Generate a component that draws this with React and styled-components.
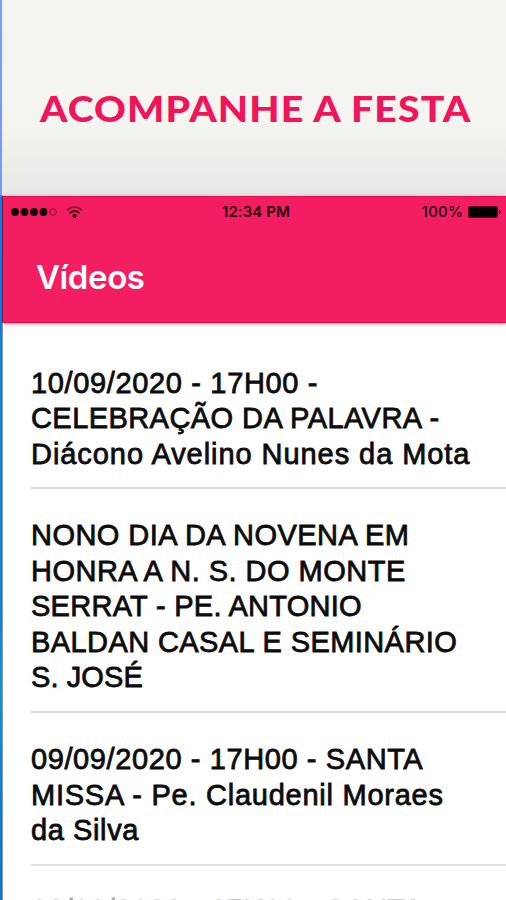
import React from "react";
import styled, { createGlobalStyle } from "styled-components";

const GlobalStyle = createGlobalStyle`
  * { box-sizing: border-box; }
  html, body { margin: 0; height: 900px; overflow: hidden; }
`;

const Page = styled.div`
  display: grid;
  grid-template-columns: 3px 1fr;
  width: 506px;
  height: 900px;
  overflow: hidden;
  background: #fff;
`;

const Edge = styled.div`
  display: grid;
  grid-template-columns: 2px 1fr;
`;

const EdgeGlow = styled.div`
  background: linear-gradient(to bottom, #7d9dfb 0, #7399f8 194px, #087de5 197px, #0680e4 600px, #0499d8 690px, #0580df 790px, #0877dd 900px);
`;

const EdgeRim = styled.div`
  background: linear-gradient(to bottom, #eef2fd 0 195px, #7a1440 196px 322px, #8a979f 323px);
`;

const Screen = styled.main`
  display: flex;
  flex-direction: column;
  min-width: 0;
  height: 900px;
  overflow: hidden;
`;

const Banner = styled.header`
  flex: none;
  height: 196px;
  padding: 84px 0 0 37px;
  background: linear-gradient(to bottom, #f4f5f1 0, #f4f5f1 120px, #e6e9e5 190px, #e6e9e5 196px);
`;

const BannerTitle = styled.h1`
  margin: 0;
  width: max-content;
  font: 900 36px/48px Lato, sans-serif;
  letter-spacing: 1px;
  color: #f0145a;
  white-space: nowrap;
  transform: scaleX(1.09);
  transform-origin: left;
`;

const AppBar = styled.section`
  flex: none;
  height: 127px;
  background: #f31d61;
  border-top: 1px solid #ec0752;
  border-bottom: 1px solid #ec0752;
  box-shadow: 0 1px 4px rgba(0, 0, 0, 0.38);
`;

const StatusBar = styled.div`
  display: grid;
  grid-template-columns: 1fr auto 1fr;
  align-items: center;
  height: 30px;
  padding: 0 5px 0 8px;
  color: #26020d;
  font: 600 15px/30px Inter, sans-serif;
`;

const Signal = styled.div`
  display: flex;
  align-items: center;
  gap: 9px;
  svg { display: block; }
`;

const Clock = styled.span`
  letter-spacing: ${(p) => p.$track}px;
  font-weight: ${(p) => p.$weight};
`;

const Battery = styled.div`
  display: flex;
  align-items: center;
  justify-content: flex-end;
  gap: 5px;
`;

const ScreenTitle = styled.h2`
  margin: 28px 0 0 33px;
  width: max-content;
  font: 600 33px/44px Inter, sans-serif;
  letter-spacing: -0.4px;
  color: #fff;
`;

const List = styled.ul`
  flex: none;
  margin: 0;
  padding: 13.5px 0 0 28px;
  list-style: none;
`;

const Row = styled.li`
  padding: ${(p) => (p.$faded ? 27.6 : 29.2)}px 0 15px;
  border-bottom: 2px solid #dfdfdf;
  color: ${(p) => (p.$faded ? "#aaa" : "#0c0c0c")};
`;

const Line = styled.span`
  display: block;
  width: max-content;
  font: 400 29px/35.5px "Liberation Sans", Arial, sans-serif;
  letter-spacing: ${(p) => p.$track}px;
  -webkit-text-stroke: 0.8px currentColor;
  white-space: nowrap;
`;

const videos = [
  [["10/09/2020 - 17H00 -", 0.65], ["CELEBRAÇÃO DA PALAVRA -", 0.43], ["Diácono Avelino Nunes da Mota", 0.94]],
  [["NONO DIA DA NOVENA EM", 0.45], ["HONRA A N. S. DO MONTE", 0.48], ["SERRAT - PE. ANTONIO", 0.27], ["BALDAN CASAL E SEMINÁRIO", 0.41], ["S. JOSÉ", 0.1]],
  [["09/09/2020 - 17H00 - SANTA", 0.6], ["MISSA - Pe. Claudenil Moraes", 0.75], ["da Silva", 0.6]],
  [["08/09/2020 - 17H00 - SANTA", 0.6]],
];

export default function App() {
  return (
    <Page>
      <GlobalStyle />
      <Edge>
        <EdgeGlow />
        <EdgeRim />
      </Edge>
      <Screen>
        <Banner><BannerTitle>ACOMPANHE A FESTA</BannerTitle></Banner>
        <AppBar>
          <StatusBar>
            <Signal>
              <svg width="46" height="10" viewBox="0 0 46 10">
                {[4, 13.5, 23, 32.5].map((x) => <circle key={x} cx={x} cy="5" r="3.9" fill="#100006" />)}
                <circle cx="42" cy="5" r="3.3" fill="none" stroke="#76102f" strokeWidth="0.9" />
              </svg>
              <svg width="17" height="13" viewBox="0 0 17 13" fill="none" stroke="#18000a">
                <path d="M1 4.3C5.2.1 11.8.1 16 4.3" strokeWidth="1.2" opacity=".7" />
                <path d="M3.7 7.1c2.7-2.7 6.9-2.7 9.6 0" strokeWidth="1.9" />
                <circle cx="8.5" cy="10" r="2" fill="#18000a" stroke="none" />
              </svg>
            </Signal>
            <Clock $track={0.1} $weight={600}>12:34 PM</Clock>
            <Battery>
              <Clock $track={0.2} $weight={500}>100%</Clock>
              <svg width="33" height="12" viewBox="0 0 33 12">
                <rect x="0" y="0" width="30" height="12" rx="2" fill="#5e0a25" />
                <rect x="1.2" y="1.3" width="27.6" height="9.4" rx="1" fill="#000" />
                <path d="M31 4c2 .5 2 3.5 0 4z" fill="#18000a" />
              </svg>
            </Battery>
          </StatusBar>
          <ScreenTitle>Vídeos</ScreenTitle>
        </AppBar>
        <List>
          {videos.map((lines, i) => (
            <Row key={i} $faded={i === 3}>
              {lines.map(([text, track]) => <Line key={text} $track={track}>{text}</Line>)}
            </Row>
          ))}
        </List>
      </Screen>
    </Page>
  );
}
